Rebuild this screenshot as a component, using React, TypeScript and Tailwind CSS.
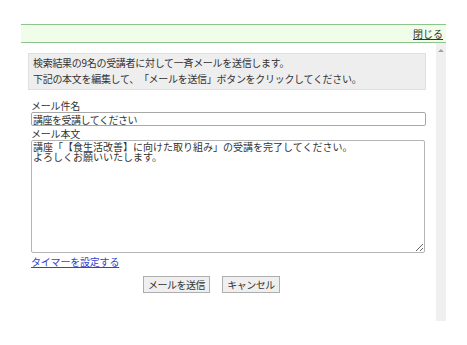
const jp = { fontFamily: '"Noto Sans CJK JP", "Liberation Sans", sans-serif' }

const App = () => {
    return (
        <div className="w-[467px] h-[345px] bg-white pt-[24px] pl-[21px] text-[10px] text-[#333] [text-spacing-trim:space-all]" style={jp}>
            <div className="w-[425px]">
                {/* header bar */}
                <div className="h-[19px] border-y border-[#8cc48c] bg-[#effde9] flex justify-end items-center pr-[3px]">
                    <a href="#" className="text-[10px] leading-none text-[#333] underline">閉じる</a>
                </div>

                <div className="flex">
                    <div className="w-[415px] h-[278px]">
                        <div className="ml-[7px] mt-[10px] w-[398px] h-[37px] bg-[#eeeeee] border border-[#e0e0e0] px-[4px] pt-[1px] leading-[16px] tracking-[-0.3px]">
                            <div>検索結果の9名の受講者に対して一斉メールを送信します。</div>
                            <div>下記の本文を編集して、「メールを送信」ボタンをクリックしてください。</div>
                        </div>

                        <div className="pl-[10px] mt-[9px]">
                            <div className="leading-[13px] tracking-[-0.2px]">メール件名</div>
                            <input
                                type="text"
                                defaultValue="講座を受講してください"
                                className="block w-[395px] h-[14px] border border-[#a8a8a8] rounded-[2px] px-[1px] text-[10px] leading-none text-[#333] tracking-[-0.5px] outline-none [text-spacing-trim:space-all]"
                                style={jp}
                            />
                            <div className="leading-[13px] mt-[1px] tracking-[-0.2px]">メール本文</div>
                            <textarea
                                defaultValue={"講座「【食生活改善】に向けた取り組み」の受講を完了してください。\nよろしくお願いいたします。"}
                                className="block w-[394px] h-[113px] border border-[#b5b5b5] rounded-[2px] px-[1px] py-[1px] text-[10px] leading-[10px] text-[#333] outline-none [text-spacing-trim:space-all]"
                                style={jp}
                            />
                            <a href="#" className="inline-block mt-[2px] text-[#3344cc] underline leading-[13px] tracking-[-0.2px]">タイマーを設定する</a>

                            <div className="flex gap-[12px] mt-[7px] pl-[112px]">
                                <button className="w-[67px] h-[17px] bg-[#efefef] border border-[#adadad] text-[10px] leading-none text-[#333] tracking-[-0.5px]" style={jp}>メールを送信</button>
                                <button className="w-[58px] h-[17px] bg-[#efefef] border border-[#adadad] text-[10px] leading-none text-[#333] tracking-[-0.5px]" style={jp}>キャンセル</button>
                            </div>
                        </div>
                    </div>

                    {/* scrollbar */}
                    <div className="w-[10px] h-[278px] bg-[#f0f0f0] flex justify-center pt-[6px]">
                        <div className="w-0 h-0 border-x-[3px] border-x-transparent border-b-[3px] border-b-[#a3a3a3]" />
                    </div>
                </div>
            </div>
        </div>
    )
}

export default App
